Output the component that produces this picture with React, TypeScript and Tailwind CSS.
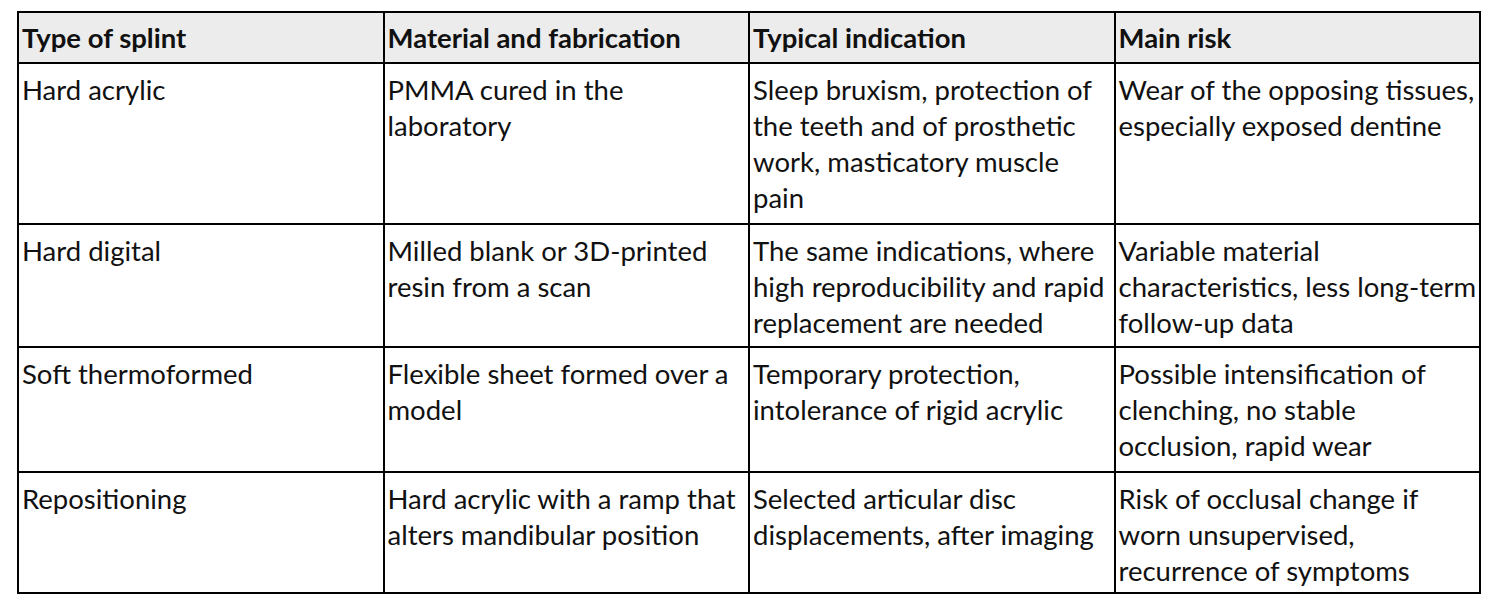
const headers = ["Type of splint", "Material and fabrication", "Typical indication", "Main risk"]

const rows: { cells: string[][]; h: string }[] = [
  {
    h: "h-[161px]",
    cells: [
      ["Hard acrylic"],
      ["PMMA cured in the", "laboratory"],
      ["Sleep bruxism, protection of", "the teeth and of prosthetic", "work, masticatory muscle", "pain"],
      ["Wear of the opposing tissues,", "especially exposed dentine"],
    ],
  },
  {
    h: "h-[123px]",
    cells: [
      ["Hard digital"],
      ["Milled blank or 3D-printed", "resin from a scan"],
      ["The same indications, where", "high reproducibility and rapid", "replacement are needed"],
      ["Variable material", "characteristics, less long-term", "follow-up data"],
    ],
  },
  {
    h: "h-[125px]",
    cells: [
      ["Soft thermoformed"],
      ["Flexible sheet formed over a", "model"],
      ["Temporary protection,", "intolerance of rigid acrylic"],
      ["Possible intensification of", "clenching, no stable", "occlusion, rapid wear"],
    ],
  },
  {
    h: "h-[121px]",
    cells: [
      ["Repositioning"],
      ["Hard acrylic with a ramp that", "alters mandibular position"],
      ["Selected articular disc", "displacements, after imaging"],
      ["Risk of occlusal change if", "worn unsupervised,", "recurrence of symptoms"],
    ],
  },
]

export default function App() {
  return (
    <div className="min-h-screen bg-white pt-[11px] pl-[17px] font-['Lato',sans-serif] text-[27.5px] text-[#111]">
      <table className="w-[1464px] table-fixed border-collapse border-2 border-black">
        <thead>
          <tr className="h-[51px] bg-[#ececec]">
            {headers.map((h) => (
              <th key={h} className="border-2 border-black px-[3px] text-left align-middle font-bold leading-[36px]">
                {h}
              </th>
            ))}
          </tr>
        </thead>
        <tbody>
          {rows.map((r, i) => (
            <tr key={i} className={r.h}>
              {r.cells.map((lines, j) => (
                <td key={j} className="border-2 border-black px-[3px] pt-[8px] align-top leading-[36px]">
                  {lines.map((l, k) => (
                    <div key={k} className="whitespace-nowrap">{l}</div>
                  ))}
                </td>
              ))}
            </tr>
          ))}
        </tbody>
      </table>
    </div>
  )
}
